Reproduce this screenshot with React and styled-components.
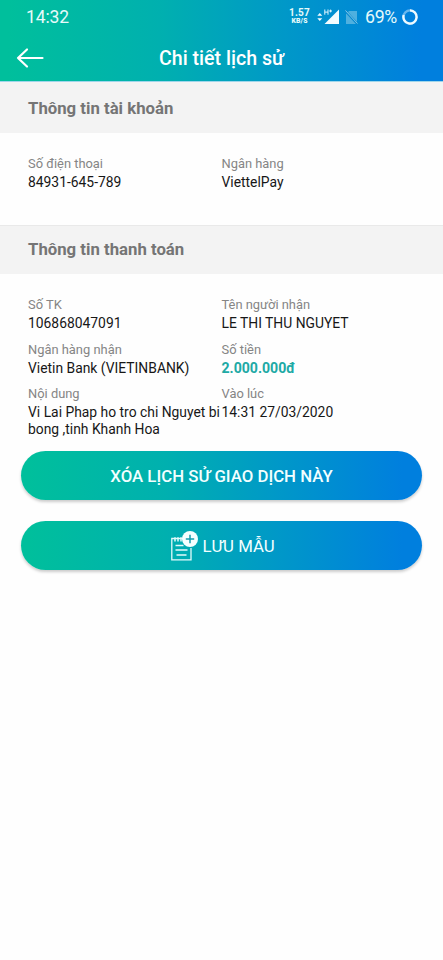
import React from "react";
import styled, { createGlobalStyle } from "styled-components";

const GlobalStyle = createGlobalStyle`
  * { box-sizing: border-box; }
  body { margin: 0; background: #fefefe; font-family: Roboto, "Noto Sans", sans-serif; }
`;

const brandGradient = "#00bf9c 2%, #00b0af 36%, #0098c8 64%, #007fde 95%";

const Screen = styled.main`
  width: 443px;
  height: 960px;
  overflow: hidden;
  background: #fefefe;
`;

const Header = styled.header`
  height: 82px;
  background: linear-gradient(91deg, ${brandGradient});
  color: #fff;
  border-bottom: 1px solid #9fd6ea;
`;

const StatusBar = styled.div`
  height: 34px;
  padding: 0 25.5px 0 26px;
  display: flex;
  align-items: center;
  color: #e6fafa;
`;

const Clock = styled.span`
  flex: 1;
  font-size: 17.5px;
  line-height: 34px;
  letter-spacing: -0.1px;
`;

const Speed = styled.span`
  display: flex;
  flex-direction: column;
  align-items: center;
  width: 20px;
  margin-right: 7px;
  padding-bottom: 1px;
`;

const SpeedValue = styled.span`
  font-weight: 700;
  font-size: 10px;
  line-height: 9.5px;
  letter-spacing: 0.2px;
`;

const SpeedUnit = styled.span`
  font-size: 6.8px;
  line-height: 8.5px;
  font-weight: 900;
  letter-spacing: 0.2px;
`;

const SignalIcon = styled.svg`
  width: 23px;
  height: 20px;
  margin-right: 5px;
`;

const SimIcon = styled.svg`
  width: 13px;
  height: 16px;
  margin-right: 7.5px;
`;

const Battery = styled.span`
  width: 33px;
  font-size: 17.7px;
  letter-spacing: -0.3px;
  margin-right: 3.5px;
`;

const BatteryIcon = styled.svg`
  width: 16px;
  height: 16px;
`;

const TitleBar = styled.div`
  height: 47px;
  display: grid;
  grid-template-columns: 60px 1fr 60px;
  align-items: center;
`;

const BackButton = styled.button`
  border: 0;
  padding: 0 0 0 16px;
  background: none;
  display: flex;
`;

const Title = styled.h1`
  margin: 0;
  padding-top: 1px;
  text-align: center;
  font-size: 19.6px;
  font-weight: 500;
  line-height: 47px;
`;

const SectionTitle = styled.h2`
  margin: 0;
  height: ${(p) => p.$height}px;
  padding: 0 28px ${(p) => p.$lift}px;
  display: flex;
  align-items: center;
  background: #f3f3f3;
  border-top: 1px solid ${(p) => p.$edge};
  color: #757575;
  font-size: 16.75px;
  font-weight: 700;
`;

const Card = styled.section`
  height: ${(p) => p.$height}px;
  padding-top: 22px;
  background: #fefefe;
  border-radius: 3px;
`;

const Fields = styled.dl`
  margin: 0;
  padding-left: 28px;
  display: grid;
  grid-template-columns: 193.5px 1fr;
  row-gap: 9px;
`;

const Field = styled.div`
  white-space: nowrap;
`;

const Label = styled.dt`
  color: #858585;
  font-size: 12.9px;
  line-height: 17px;
  height: 17px;
`;

const Value = styled.dd`
  margin: 0;
  padding-top: 2px;
  color: ${(p) => (p.$accent ? "#20a9a5" : "#171717")};
  font-weight: ${(p) => (p.$accent ? 700 : 400)};
  font-size: ${(p) => (p.$accent ? 14.1 : 13.87)}px;
  line-height: 16.5px;
  white-space: pre;
`;

const Actions = styled.div`
  padding: 14px 21px 0;
  display: flex;
  flex-direction: column;
  gap: 21px;
`;

const ActionButton = styled.button`
  height: 49px;
  padding: 0 0 0 ${(p) => p.$indent || 0}px;
  border: 0;
  border-radius: 25px;
  background: linear-gradient(91deg, ${brandGradient});
  box-shadow: 0 2px 3px rgba(0, 0, 0, 0.2);
  color: #f2ffff;
  font-family: inherit;
  font-size: 16.8px;
  font-weight: ${(p) => p.$weight};
  display: flex;
  align-items: center;
  justify-content: center;
  gap: 4px;
`;

const accountFields = [
  { label: "Số điện thoại", value: "84931-645-789" },
  { label: "Ngân hàng", value: "ViettelPay" },
];

const paymentFields = [
  { label: "Số TK", value: "106868047091" },
  { label: "Tên người nhận", value: "LE THI THU NGUYET" },
  { label: "Ngân hàng nhận", value: "Vietin Bank (VIETINBANK)" },
  { label: "Số tiền", value: "2.000.000đ", accent: true },
  { label: "Nội dung", value: "Vi Lai Phap ho tro chi Nguyet bi\nbong ,tinh Khanh Hoa" },
  { label: "Vào lúc", value: "14:31 27/03/2020" },
];

function FieldList({ items }) {
  return (
    <Fields>
      {items.map((f) => (
        <Field key={f.label}>
          <Label>{f.label}</Label>
          <Value $accent={f.accent}>{f.value}</Value>
        </Field>
      ))}
    </Fields>
  );
}

function SaveTemplateIcon() {
  return (
    <svg width="27" height="30" viewBox="0 0 27 30" fill="none" stroke="#e2fafb" strokeWidth="1.3">
      <path d="M12.5 7.5H0.8V28.8H20V17" />
      <path d="M4 10.5V6.2M7 10.5V6.2M10 10.5V6.2" strokeWidth="1.5" />
      <path d="M4.5 14.5H12.5M4.5 19H16.5M5.5 24H15.5" strokeWidth="1.4" />
      <circle cx="19" cy="8" r="8" fill="#f5ffff" stroke="none" />
      <path d="M14.8 8H23.2M19 3.8V12.2" stroke="#159eae" strokeWidth="1.5" />
    </svg>
  );
}

export default function App() {
  return (
    <Screen>
      <GlobalStyle />
      <Header>
        <StatusBar>
          <Clock>14:32</Clock>
          <Speed>
            <SpeedValue>1.57</SpeedValue>
            <SpeedUnit>KB/S</SpeedUnit>
          </Speed>
          <SignalIcon viewBox="0 0 23 20" fill="#f2fcff">
            <path d="M0.3 8.7L2.8 6L5.3 8.7ZM0.3 11.3H5.3L2.8 14Z" />
            <path d="M22 2.5V17H7.5Z" />
            <path d="M7.8 2.5V7.7M11 2.5V7.7M7.8 5.1H11M12.2 4H15M13.6 2.6V5.4" stroke="#e2f6ff" strokeWidth="1" />
          </SignalIcon>
          <SimIcon viewBox="0 0 13 16">
            <path d="M4 2H12V15H1V5Z" fill="#4fb0df" />
            <path d="M0.5 2L12.5 15" stroke="#0789cf" strokeWidth="2.4" />
            <path d="M0.5 1.5L12.5 14.5" stroke="#83c8e8" strokeWidth="1" />
          </SimIcon>
          <Battery>69%</Battery>
          <BatteryIcon viewBox="0 0 16 16" fill="none" strokeWidth="2.3">
            <circle cx="8" cy="8" r="6.6" stroke="#69b7ed" />
            <path d="M8 1.4A6.6 6.6 0 1 1 1.7 6" stroke="#eefaff" />
          </BatteryIcon>
        </StatusBar>
        <TitleBar>
          <BackButton aria-label="Quay lại">
            <svg width="29" height="22" viewBox="0 0 29 22" fill="none" stroke="#fff" strokeWidth="2.2" strokeLinecap="round" strokeLinejoin="round">
              <path d="M26.5 11H2M11 2.5L2 11L11 19.5" />
            </svg>
          </BackButton>
          <Title>Chi tiết lịch sử</Title>
        </TitleBar>
      </Header>
      <SectionTitle $height={51} $edge="#f3f3f3" $lift={0}>Thông tin tài khoản</SectionTitle>
      <Card $height={92}>
        <FieldList items={accountFields} />
      </Card>
      <SectionTitle $height={49} $edge="#e9e9e9" $lift={2}>Thông tin thanh toán</SectionTitle>
      <Card $height={338}>
        <FieldList items={paymentFields} />
        <Actions>
          <ActionButton $weight={500}>XÓA LỊCH SỬ GIAO DỊCH NÀY</ActionButton>
          <ActionButton $weight={400} $indent={3}>
            <SaveTemplateIcon />
            LƯU MẪU
          </ActionButton>
        </Actions>
      </Card>
    </Screen>
  );
}
